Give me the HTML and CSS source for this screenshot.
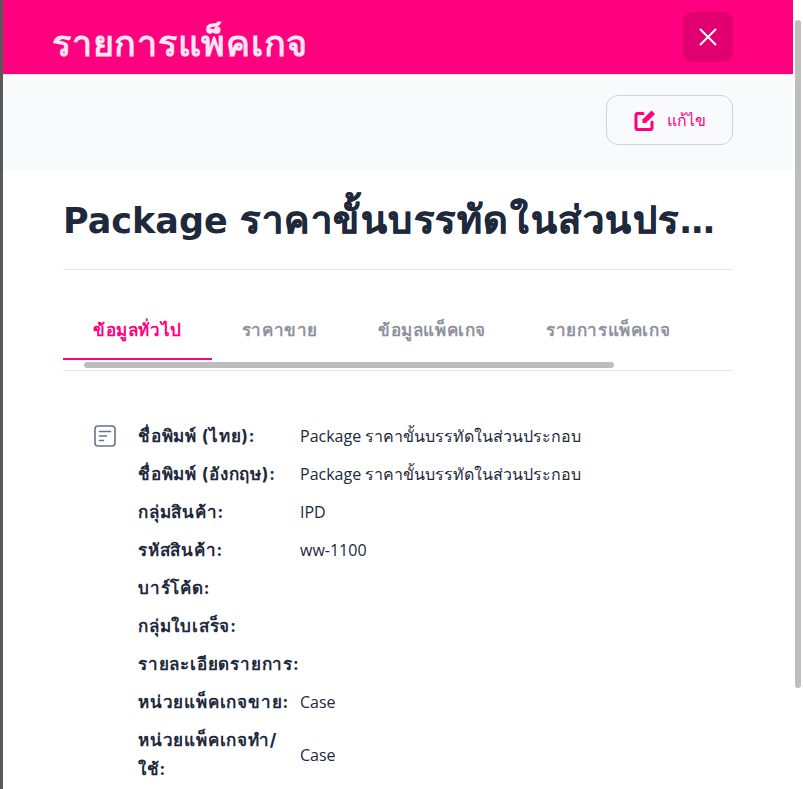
FILE: index.html
```html
<!DOCTYPE html>
<html lang="th">
<head>
    <meta charset="UTF-8">
    <meta name="viewport" content="width=device-width, initial-scale=1.0">
    <title>รายการแพ็คเกจ</title>
    <link rel="stylesheet" href="styles.css">
</head>
<body>
    <div class="backdrop"></div>
    <main class="panel">
        <header class="panel-header">
            <h2 class="panel-title">รายการแพ็คเกจ</h2>
            <button class="close-btn" aria-label="close">
                <svg width="24" height="24" viewBox="0 0 24 24" fill="none" stroke="#fff" stroke-width="2" stroke-linecap="round"><path d="M4.5 4.5l15 15M19.5 4.5l-15 15"/></svg>
            </button>
        </header>
        <div class="action-bar">
            <button class="edit-btn">
                <svg width="24" height="24" viewBox="0 0 24 24" fill="none" stroke="#ff007f" stroke-width="3" stroke-linecap="round" stroke-linejoin="round">
                    <path d="M10 5.5H4.5A1.5 1.5 0 0 0 3 7v13a1.5 1.5 0 0 0 1.5 1.5h13A1.5 1.5 0 0 0 19 20v-6"/>
                    <path d="M9.5 15v-3.5L18.5 2.5 22 6l-9 9z" fill="#ff007f" stroke="none"/>
                </svg>
                <span>แก้ไข</span>
            </button>
        </div>
        <section class="content">
            <h1 class="product-name">Package <span class="product-name-th">ราคาขั้นบรรทัดในส่วนประกอบ</span></h1>
            <nav class="tabs">
                <a class="tab active">ข้อมูลทั่วไป</a>
                <a class="tab">ราคาขาย</a>
                <a class="tab">ข้อมูลแพ็คเกจ</a>
                <a class="tab">รายการแพ็คเกจ</a>
                <div class="tabs-thumb"></div>
            </nav>
            <div class="details">
                <svg class="details-icon" width="24" height="24" viewBox="0 0 24 24" fill="none" stroke="#64748b" stroke-width="1.6" stroke-linecap="round">
                    <rect x="2" y="2" width="20" height="20" rx="3"/>
                    <path d="M6.5 7.5h11M6.5 12h7M6.5 16.5h4"/>
                </svg>
                <table class="info-table">
                    <tr><th>ชื่อพิมพ์ (ไทย):</th><td>Package ราคาขั้นบรรทัดในส่วนประกอบ</td></tr>
                    <tr><th>ชื่อพิมพ์ (อังกฤษ):</th><td>Package ราคาขั้นบรรทัดในส่วนประกอบ</td></tr>
                    <tr><th>กลุ่มสินค้า:</th><td>IPD</td></tr>
                    <tr><th>รหัสสินค้า:</th><td>ww-1100</td></tr>
                    <tr><th>บาร์โค้ด:</th><td></td></tr>
                    <tr><th>กลุ่มใบเสร็จ:</th><td></td></tr>
                    <tr><th>รายละเอียดรายการ:</th><td></td></tr>
                    <tr><th>หน่วยแพ็คเกจขาย:</th><td>Case</td></tr>
                    <tr><th>หน่วยแพ็คเกจทำ/<br>ใช้:</th><td>Case</td></tr>
                </table>
            </div>
        </section>
    </main>
    <div class="scrollbar"><div class="scrollbar-thumb"></div></div>
</body>
</html>
```

FILE: styles.css
```css
* {
    box-sizing: border-box;
}

html, body {
    height: 100%;
}

body {
    margin: 0;
    display: flex;
    overflow: hidden;
    background-color: #fff;
    font-family: "Open Sans", "Noto Sans", sans-serif;
    color: #1e293b;
}

.backdrop {
    width: 3px;
    flex: none;
    background-color: #595959;
}

.panel {
    width: 790px;
    flex: none;
}

.panel-header {
    height: 74px;
    display: flex;
    align-items: center;
    justify-content: space-between;
    padding: 0 60px 0 49px;
    background-color: #ff007f;
}

.panel-title {
    margin: 14px 0 0;
    font-family: "DejaVu Sans", sans-serif;
    font-size: 36px;
    font-weight: 600;
    letter-spacing: 0.75px;
    line-height: 1;
    color: #fde6f2;
}

.close-btn {
    width: 50px;
    height: 50px;
    display: flex;
    align-items: center;
    justify-content: center;
    padding: 0;
    border: 0;
    border-radius: 10px;
    background-color: #e0006f;
}

.action-bar {
    height: 96px;
    display: flex;
    justify-content: flex-end;
    align-items: flex-start;
    padding: 20px 60px 0 0;
    border-top: 1px solid #e2e8f0;
    background-color: #f8fafc;
}

.edit-btn {
    width: 127px;
    height: 50px;
    display: flex;
    align-items: center;
    justify-content: center;
    gap: 10px;
    padding: 0;
    border: 1px solid #cbd5e1;
    border-radius: 12px;
    background: transparent;
    font-family: inherit;
    font-size: 16px;
    font-weight: 500;
    color: #ff007f;
}

.content {
    padding: 0 60px;
}

.product-name {
    height: 100px;
    margin: 0;
    padding: 23px 3px 0 0;
    border-bottom: 1px solid #e2e8f0;
    font-family: "DejaVu Sans", sans-serif;
    font-size: 35px;
    font-weight: 700;
    line-height: 52px;
    color: #1e293b;
    white-space: nowrap;
    overflow: hidden;
    text-overflow: ellipsis;
}

.product-name-th {
    font-family: Inter, sans-serif;
    font-size: 38px;
    letter-spacing: 1.55px;
    -webkit-text-stroke: 0.5px #1e293b;
}

.tabs {
    position: relative;
    height: 101px;
    display: flex;
    align-items: flex-start;
    padding-top: 37px;
    border-bottom: 1px solid #e2e8f0;
}

.tab {
    height: 53px;
    padding: 11px 30px 0;
    font-family: Inter, sans-serif;
    font-size: 17px;
    font-weight: 700;
    letter-spacing: 0.6px;
    line-height: 24px;
    color: #8e929c;
    white-space: nowrap;
}

.tab.active {
    color: #ff007f;
    border-bottom: 2px solid #ff007f;
}

.tabs-thumb {
    position: absolute;
    left: 21px;
    top: 92px;
    width: 530px;
    height: 6px;
    border-radius: 3px;
    background-color: #bdbdbd;
}

.details {
    display: flex;
    align-items: flex-start;
    gap: 21px;
    padding: 46px 0 0 30px;
}

.details-icon {
    flex: none;
    margin-top: 7px;
}

.info-table {
    width: 596px;
    table-layout: fixed;
    border-collapse: collapse;
    font-size: 16px;
    line-height: 30px;
}

.info-table th {
    width: 162px;
    padding: 4.5px 0;
    font-family: Inter, sans-serif;
    font-size: 17px;
    font-weight: 700;
    letter-spacing: 0.8px;
    line-height: 29px;
    text-align: left;
    white-space: nowrap;
    vertical-align: middle;
}

.info-table td {
    padding: 4px 0;
    font-weight: 400;
    vertical-align: middle;
}

.scrollbar {
    position: relative;
    flex: 1;
}

.scrollbar-thumb {
    position: absolute;
    top: 20px;
    left: 2px;
    width: 6px;
    height: 668px;
    border-radius: 3px;
    background-color: #bdbdbd;
}
```
